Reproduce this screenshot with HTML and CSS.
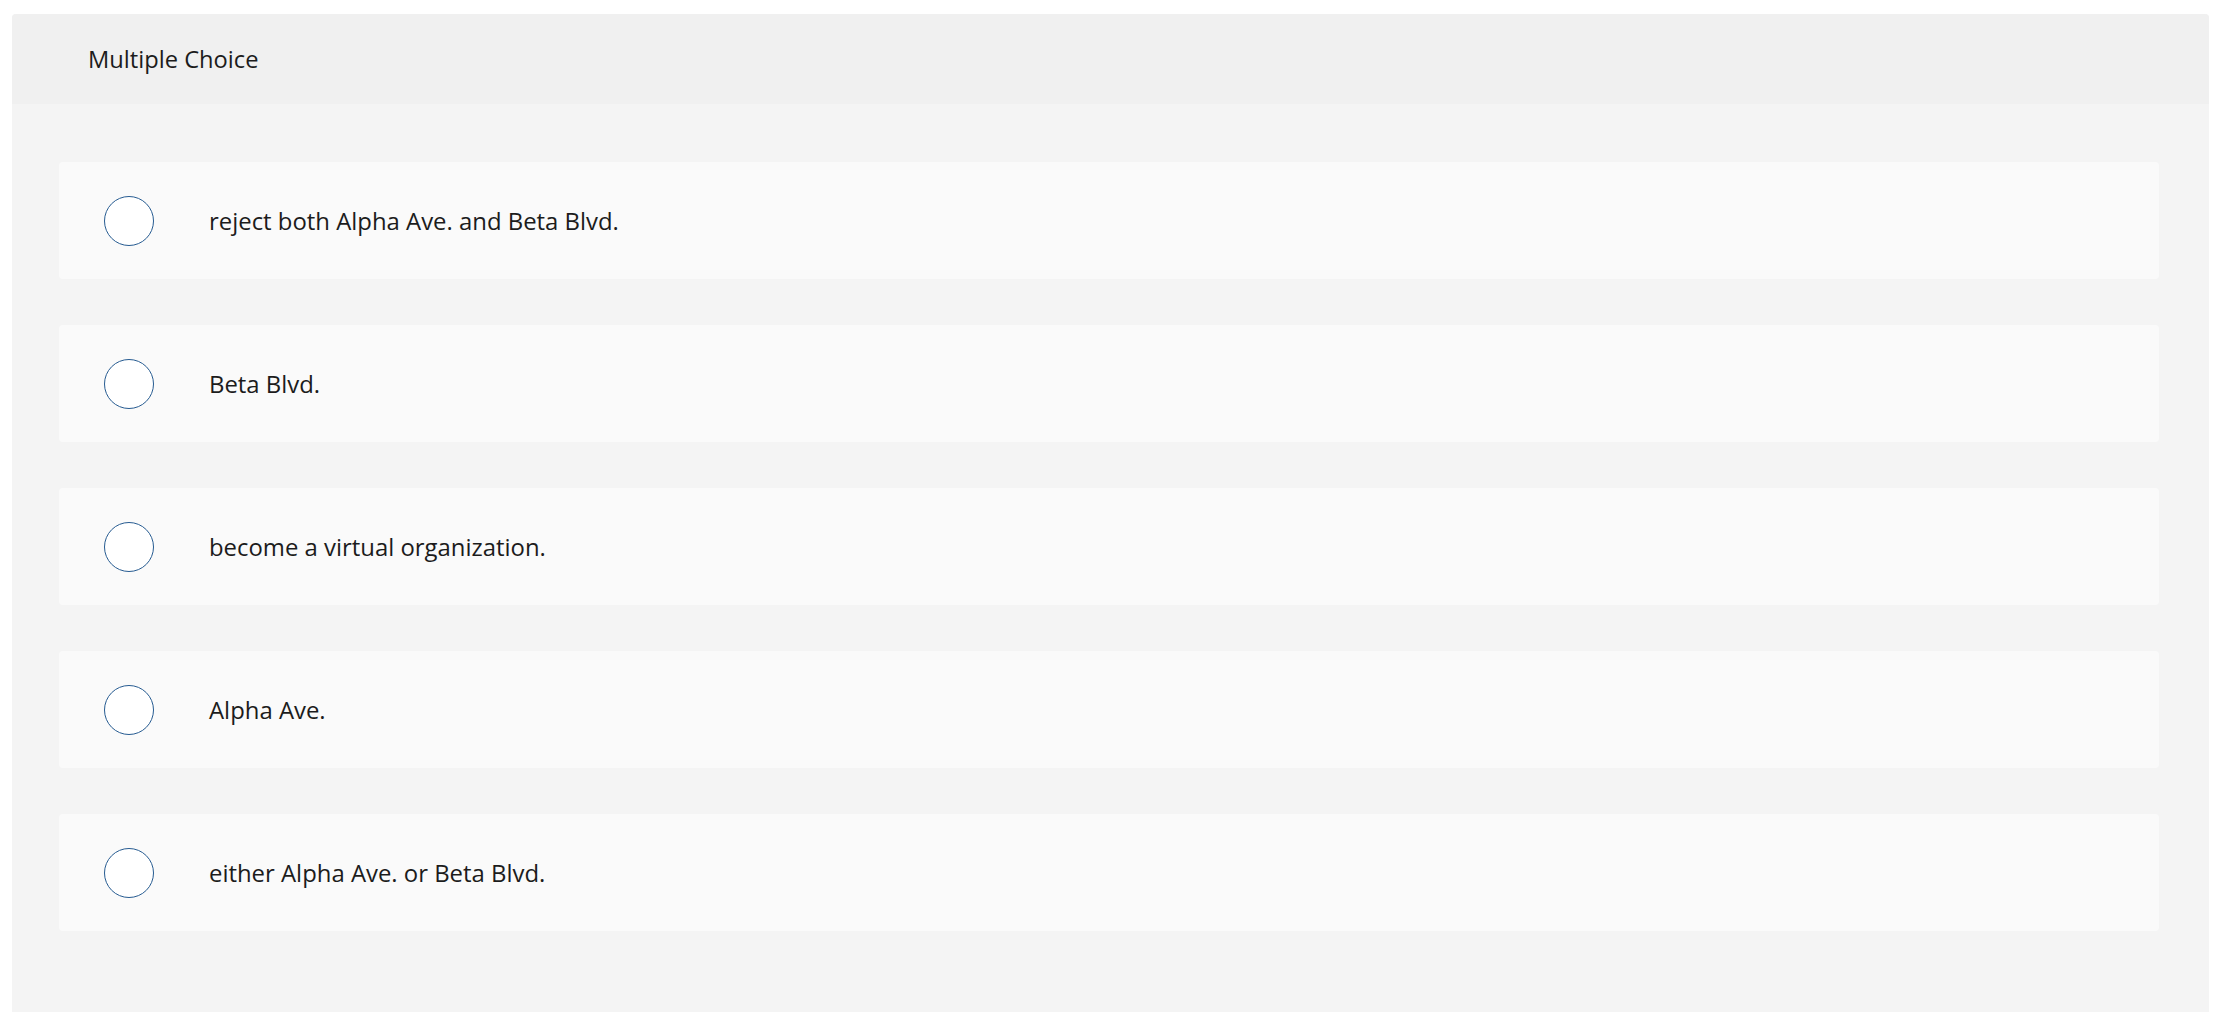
FILE: index.html
```html
<!DOCTYPE html>
<html lang="en">
<head>
<meta charset="utf-8">
<title>Multiple Choice</title>
<link rel="stylesheet" href="styles.css">
</head>
<body>
  <section class="card">
    <header class="card-head">Multiple Choice</header>
    <div class="choices">
      <label class="choice"><span class="radio"></span><span class="choice-text">reject both Alpha Ave. and Beta Blvd.</span></label>
      <label class="choice"><span class="radio"></span><span class="choice-text">Beta Blvd.</span></label>
      <label class="choice"><span class="radio"></span><span class="choice-text">become a virtual organization.</span></label>
      <label class="choice"><span class="radio"></span><span class="choice-text">Alpha Ave.</span></label>
      <label class="choice"><span class="radio"></span><span class="choice-text">either Alpha Ave. or Beta Blvd.</span></label>
    </div>
  </section>
</body>
</html>
```
FILE: styles.css
```css
html, body {
  margin: 0;
  padding: 0;
  background: #ffffff;
}
body {
  font-family: "Open Sans", "Noto Sans", Arial, sans-serif;
  color: #1c1c1c;
  padding: 14px 5px 0 12px;
}
.card {
  background: #f4f4f4;
  border-radius: 4px 4px 0 0;
  min-height: 998px;
  overflow: hidden;
}
.card-head {
  height: 90px;
  background: #f0f0f0;
  display: flex;
  align-items: center;
  padding-left: 76px;
  font-size: 23.7px;
  color: #1c1c1c;
}
.choices {
  display: flex;
  flex-direction: column;
  gap: 46px;
  padding: 58px 50px 40px 47px;
}
.choice {
  height: 117px;
  background: #fafafa;
  border-radius: 4px;
  display: flex;
  align-items: center;
  padding-left: 45px;
}
.radio {
  width: 48px;
  height: 48px;
  border: 1.5px solid #265b91;
  border-radius: 50%;
  background: #ffffff;
  flex: none;
  margin-right: 55px;
}
.choice-text {
  font-size: 23.9px;
  color: #1c1c1c;
}
```
